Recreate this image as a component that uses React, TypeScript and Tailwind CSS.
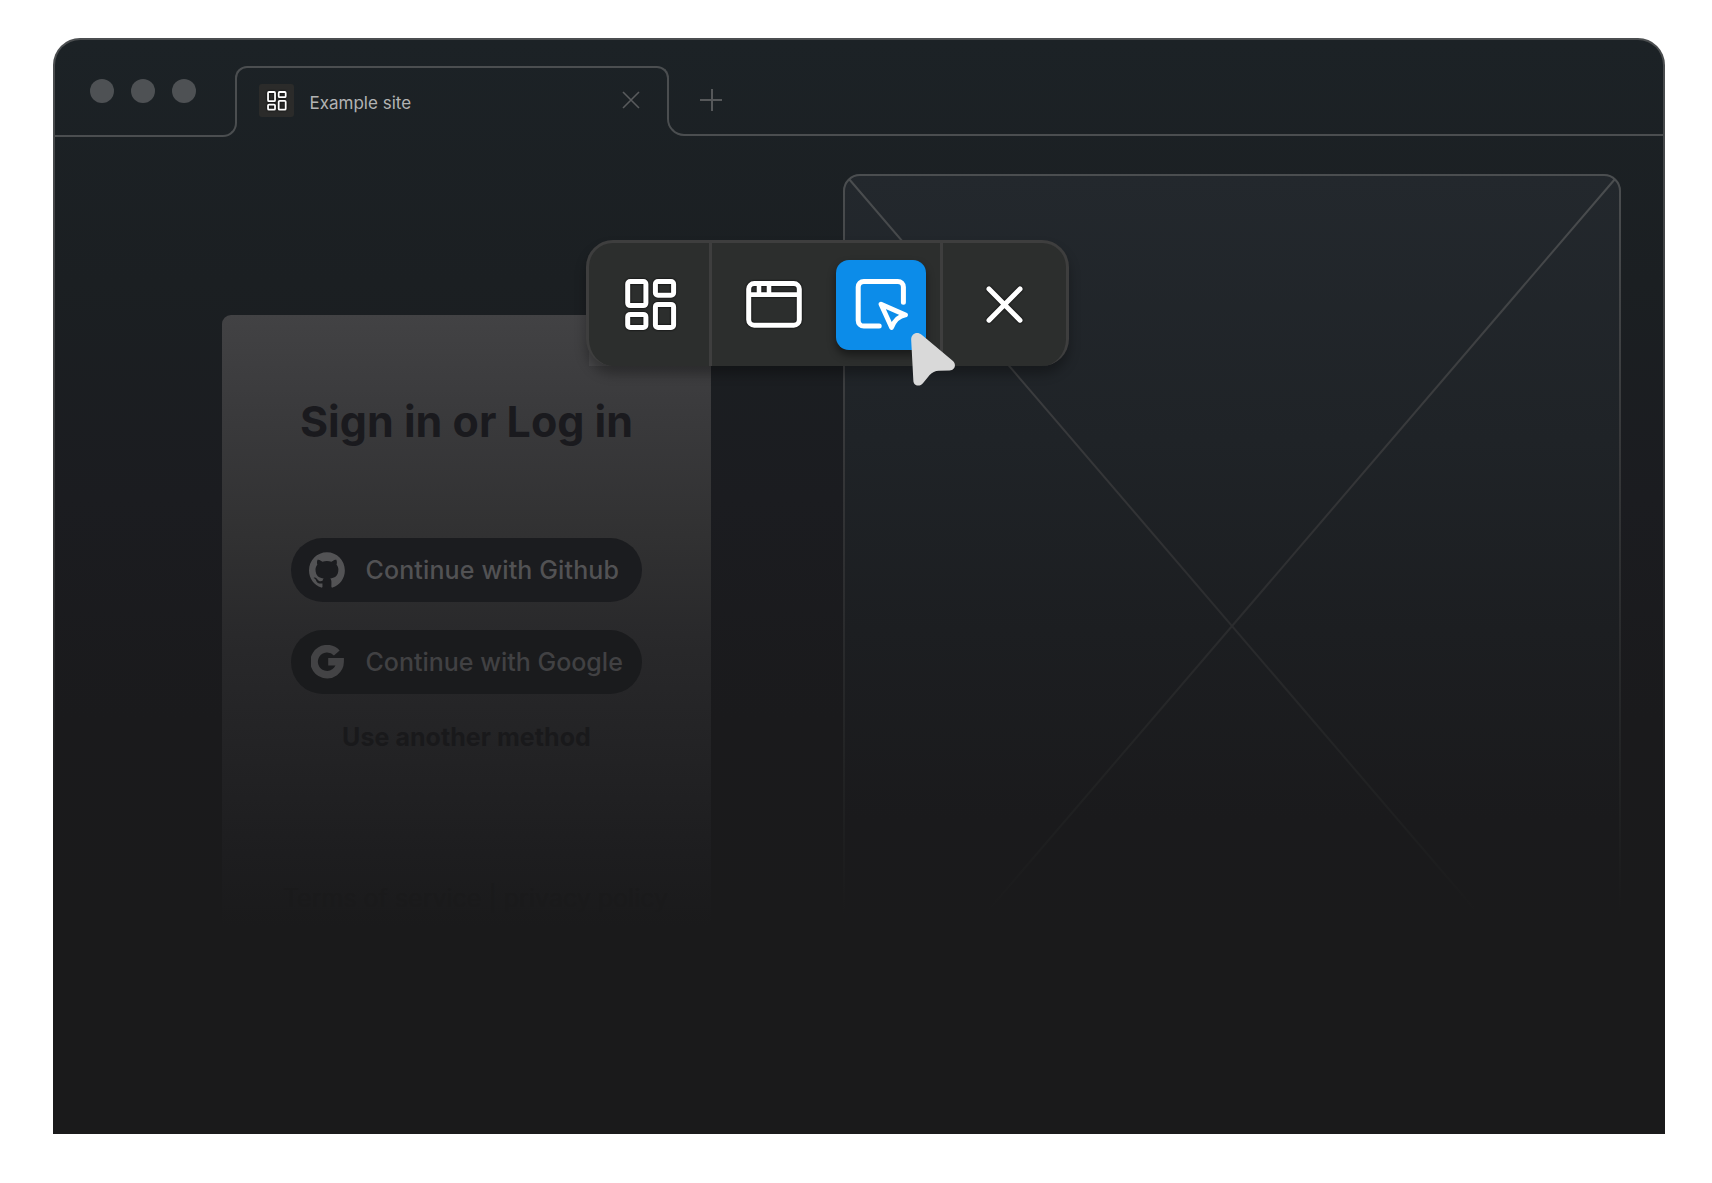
import type { ReactNode } from "react";

const LINE = "border-[#4b4e50]";

function DashboardIcon({ className, stroke = 5 }: { className?: string; stroke?: number }) {
  return (
    <svg viewBox="0 0 52 52" className={className} fill="none" stroke="#fff" strokeWidth={stroke} strokeLinejoin="round">
      <rect x="2.7" y="2.6" width="18.2" height="24" rx="2.5" />
      <rect x="30.4" y="2.6" width="18.2" height="13.6" rx="2.5" />
      <rect x="2.7" y="35.4" width="18.2" height="13" rx="2.5" />
      <rect x="30.4" y="25.4" width="18.2" height="23" rx="2.5" />
    </svg>
  );
}

function WindowIcon() {
  return (
    <svg viewBox="0 0 56 47" className="h-[47px] w-[56px] drop-shadow-[0_0_1px_#000]" fill="none" stroke="#fff" strokeWidth="5">
      <rect x="2.7" y="2.6" width="50.6" height="41.6" rx="5.5" />
      <path d="M3 13.6H53M13 3v10M23 3v10" strokeWidth="4.6" />
    </svg>
  );
}

function SelectIcon() {
  return (
    <svg viewBox="0 0 54 54" className="h-[54px] w-[54px]" fill="none" stroke="#fff" strokeWidth="5" strokeLinecap="round" strokeLinejoin="round">
      <path d="M49.4 24.3V9a5.6 5.6 0 0 0-5.6-5.6H9.8A5.6 5.6 0 0 0 4.2 9v33.5a5.6 5.6 0 0 0 5.6 5.6H25.2" />
      <path d="M27 26.2 51.5 37 Q42 38.500 37.600 49.400Z" strokeWidth="4.8" />
    </svg>
  );
}

function CloseIcon() {
  return (
    <svg viewBox="0 0 37 37" className="h-[37px] w-[37px] drop-shadow-[0_0_1px_#000]" stroke="#fff" strokeWidth="5" strokeLinecap="round">
      <path d="M3 2.9 34 34.2M34 2.9 3 34.2" />
    </svg>
  );
}

function Pointer() {
  return (
    <svg viewBox="304 340 133 159" className="absolute top-[90px] left-[322px] h-[53px] w-[44.3px]" fill="#d9d9d9">
      <path d="M304.5 360C304 342 322 334 336 345L430 424C441 434 436 452 420 452.5L388 453C376 453.500 368 458 360 466L341 489C331 503 311 500 311 482Z" />
    </svg>
  );
}

function GithubMark() {
  return (
    <svg viewBox="0 0 98 96" className="ml-[18px] h-[36px] w-[36px]" fill="#535355">
      <path fillRule="evenodd" clipRule="evenodd" d="M48.854 0C21.839 0 0 22 0 49.217c0 21.756 13.993 40.172 33.405 46.690 2.427.490 3.316-1.059 3.316-2.362 0-1.141-.080-5.052-.080-9.127-13.590 2.934-16.420-5.867-16.420-5.867-2.184-5.704-5.420-7.170-5.420-7.170-4.448-3.015.324-3.015.324-3.015 4.934.326 7.523 5.052 7.523 5.052 4.367 7.496 11.404 5.378 14.235 4.074.404-3.178 1.699-5.378 3.074-6.600-10.839-1.141-22.243-5.378-22.243-24.283 0-5.378 1.940-9.778 5.014-13.200-.485-1.222-2.184-6.275.486-13.038 0 0 4.125-1.304 13.426 5.052a46.970 46.970 0 0 1 12.214-1.630c4.125 0 8.330.571 12.213 1.630 9.302-6.356 13.427-5.052 13.427-5.052 2.670 6.763.970 11.816.485 13.038 3.155 3.422 5.015 7.822 5.015 13.200 0 18.905-11.404 23.060-22.324 24.283 1.780 1.548 3.316 4.481 3.316 9.126 0 6.600-.080 11.897-.080 13.526 0 1.304.890 2.853 3.316 2.364 19.412-6.520 33.405-24.935 33.405-46.691C97.707 22 75.788 0 48.854 0z" />
    </svg>
  );
}

function GoogleMark() {
  return (
    <svg viewBox="0 0 33 34" className="mr-[1px] ml-[20px] h-[34px] w-[33px]" fill="none" stroke="#434345" strokeWidth="7.6">
      <path d="M25.800 8A13 13 0 1 0 29.100 16.800H17.200" />
    </svg>
  );
}

function ProviderButton({ icon, label, tone }: { icon: ReactNode; label: string; tone: string }) {
  return (
    <button className={`flex h-[64px] w-[351px] items-center rounded-full text-[25px] font-medium ${tone}`}>
      {icon}
      <span className="mt-px ml-[20.5px] whitespace-nowrap">{label}</span>
    </button>
  );
}

function TabBar() {
  return (
    <header className="flex h-[97px] shrink-0">
      <div className="relative w-[182px] shrink-0">
        <div className={`absolute bottom-0 left-0 h-[40px] w-full rounded-br-[14px] border-r-2 border-b-2 ${LINE}`} />
        <div className="flex gap-[17px] pt-[39px] pl-[34.6px]">
          <span className="size-[24px] rounded-full bg-[#4e5154]" />
          <span className="size-[24px] rounded-full bg-[#4e5154]" />
          <span className="size-[24px] rounded-full bg-[#4e5154]" />
        </div>
      </div>
      <div className={`mt-[26px] -ml-[2px] flex h-[36px] w-[434px] shrink-0 rounded-t-[12px] border-2 border-b-0 ${LINE}`}>
        <div className="mt-[16px] ml-[22px] flex h-[33px] w-[35px] shrink-0 items-center justify-center rounded-[3px] bg-[#2b2b2a]">
          <DashboardIcon className="size-[20px] drop-shadow-[0_0_1px_#000]" stroke={4.6} />
        </div>
        <span className="mt-[23px] ml-[15.5px] h-[24px] text-[17px] leading-6 whitespace-nowrap text-[#b2b3b3]">Example site</span>
        <svg viewBox="0 0 18 18" className="mt-[23px] mr-[27px] ml-auto size-[18px] shrink-0" stroke="#595b5d" strokeWidth="1.600">
          <path d="M1 1 17 17M17 1 1 17" />
        </svg>
      </div>
      <div className="relative -ml-[2px] flex-1">
        <div className={`absolute bottom-px left-0 h-[36px] w-full rounded-bl-[17px] border-b-2 border-l-2 ${LINE}`} />
        <svg viewBox="0 0 22 22" className="mt-[49px] ml-[33px] size-[22px]" stroke="#56585a" strokeWidth="2">
          <path d="M0 11H22M12 0V22" />
        </svg>
      </div>
    </header>
  );
}

function SignInCard() {
  return (
    <section className="mt-[178px] ml-[167px] flex h-[612px] w-[489px] shrink-0 flex-col items-center rounded-t-[9px] bg-[linear-gradient(180deg,#424244_0%,#39393b_18%,#313132_36%,#29292b_52%,#232325_70%,#1d1d1f_88%,#1a1a1b_100%)]">
      <h1 className="mt-[79px] h-[54px] text-[43px] leading-[54px] font-bold whitespace-nowrap text-[#1a1a1e]">Sign in or Log in</h1>
      <div className="mt-[90px] flex flex-col gap-[28px]">
        <ProviderButton icon={<GithubMark />} label="Continue with Github" tone="bg-[#1b1c1f] text-[#525254] tracking-[0.13px]" />
        <ProviderButton icon={<GoogleMark />} label="Continue with Google" tone="bg-[#1a1b1d] text-[#414143]" />
      </div>
      <p className="mt-[26px] h-[34px] text-[25px] leading-[34px] font-bold tracking-[0.05px] whitespace-nowrap text-[#19191b]">Use another method</p>
      <p className="mt-[127px] ml-[18px] h-[34px] text-[25px] leading-[34px] whitespace-nowrap text-[#1a1a1b]">Terms of service | privacy policy</p>
    </section>
  );
}

function ImagePlaceholder() {
  return (
    <section className="mt-[37px] ml-[132px] h-[760px] w-[778px] shrink-0">
      <svg viewBox="0 0 778 760" className="h-full w-full" fill="none">
        <defs>
          <linearGradient id="fill" x1="0" y1="0" x2="0" y2="760" gradientUnits="userSpaceOnUse">
            <stop offset="0" stopColor="#23282d" />
            <stop offset="0.350" stopColor="#1f2327" />
            <stop offset="0.600" stopColor="#1c1e21" />
            <stop offset="0.850" stopColor="#1a1a1c" />
            <stop offset="1" stopColor="#1a1a1b" />
          </linearGradient>
          <linearGradient id="edge" x1="0" y1="0" x2="0" y2="740" gradientUnits="userSpaceOnUse">
            <stop offset="0" stopColor="#4b4e50" />
            <stop offset="0.400" stopColor="#353638" />
            <stop offset="0.600" stopColor="#2b2c2e" />
            <stop offset="0.800" stopColor="#222324" />
            <stop offset="1" stopColor="#1a1a1b" />
          </linearGradient>
        </defs>
        <path d="M0 760V17A17 17 0 0 1 17 0H761A17 17 0 0 1 778 17V760Z" fill="url(#fill)" />
        <path d="M1 760V17A16 16 0 0 1 17 1H761A16 16 0 0 1 777 17V760M6 5 640 745M772 5 138 745" stroke="url(#edge)" strokeWidth="2" />
      </svg>
    </section>
  );
}

function Toolbar() {
  return (
    <div className="absolute top-[240px] left-[586px] flex h-[126px] w-[483px] rounded-[27px] border-[3px] border-b-0 border-[#3e3e3e] bg-[#2c2e2d] shadow-[0_8px_12px_rgba(0,0,0,0.3)]">
      <div className="flex w-[123px] shrink-0 items-center justify-center border-r-[3px] border-[#3e3e3e]">
        <DashboardIcon className="ml-[3px] size-[52px] drop-shadow-[0_0_1px_#000]" />
      </div>
      <div className="flex w-[231px] shrink-0 items-center border-r-[3px] border-[#3e3e3e]">
        <div className="ml-[34px]">
          <WindowIcon />
        </div>
        <div className="ml-[34px] flex size-[90px] items-center justify-center rounded-[13px] bg-[#0c8ce9] shadow-[0_5px_8px_rgba(0,0,0,0.45)]">
          <SelectIcon />
        </div>
      </div>
      <div className="flex flex-1 items-center justify-center">
        <CloseIcon />
      </div>
      <Pointer />
    </div>
  );
}

export default function App() {
  return (
    <div className="relative h-[1183px] w-[1712px] overflow-hidden bg-white pt-[38px] pl-[53px] font-['Inter',sans-serif]">
      <div className="h-[1096px] w-[1612px] overflow-hidden rounded-t-[27px] bg-[linear-gradient(180deg,#4b4e50_0%,#414345_20%,#2c2d2f_50%,#1a1a1b_72%)] px-[2px] pt-[2px]">
        <main className="flex h-[1094px] flex-col overflow-hidden rounded-t-[25px] bg-[linear-gradient(180deg,#1c2226_0%,#1b1f22_22%,#1b1c20_42%,#1a1a1c_62%,#1a1a1b_80%)]">
          <TabBar />
          <div className="flex">
            <SignInCard />
            <ImagePlaceholder />
          </div>
        </main>
      </div>
      <div className="absolute top-[346px] left-[589px] size-[20px] bg-[#49494b]" />
      <Toolbar />
    </div>
  );
}
